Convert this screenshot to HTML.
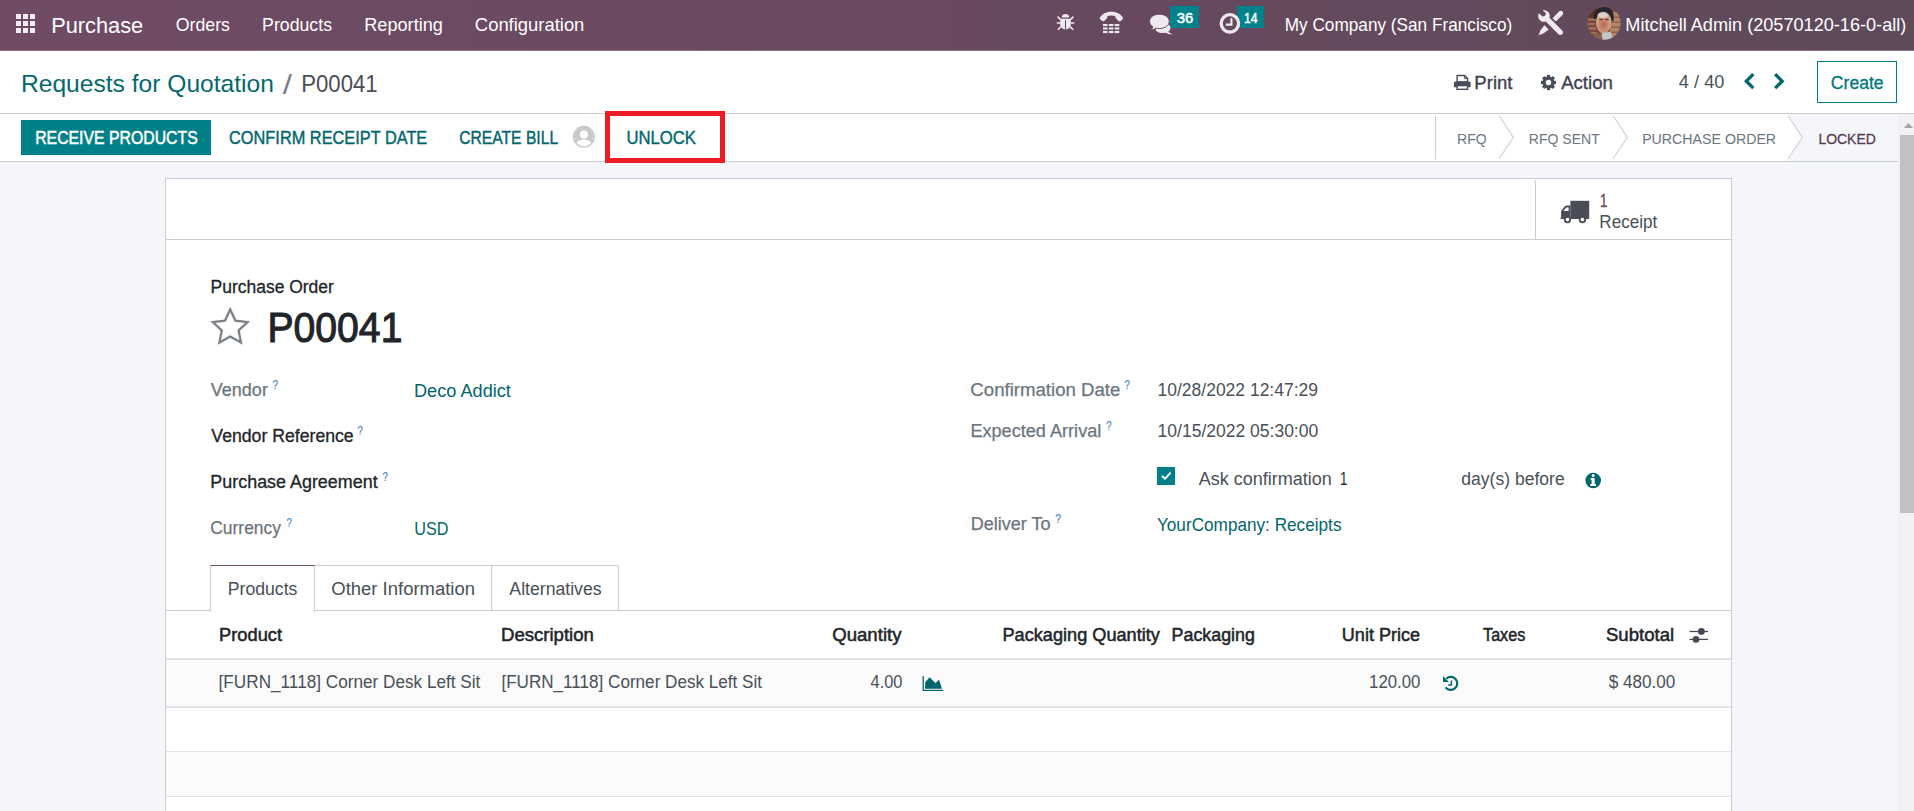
<!DOCTYPE html>
<html lang="en">
<head>
<meta charset="utf-8">
<title>Odoo - P00041</title>
<style>
html,body{margin:0;padding:0;}
body{width:1914px;height:811px;overflow:hidden;background:#f5f6fa;font-family:"Liberation Sans",sans-serif;}
#app{position:relative;width:1914px;height:811px;overflow:hidden;background:#f5f6fa;}
.abs{position:absolute;}
.t{position:absolute;white-space:nowrap;line-height:normal;transform-origin:0 0;}
svg{position:absolute;overflow:visible;}
.navbar{position:absolute;left:0;top:0;width:1914px;height:50px;background:linear-gradient(90deg,#704b66 0%,#68495f 50%,#5e4a5b 100%);}
.navbar-edge{position:absolute;left:0;top:50px;width:1914px;height:1px;background:linear-gradient(90deg,#92768b 0%,#8b7585 50%,#857582 100%);}
.cp{position:absolute;left:0;top:51px;width:1914px;height:62px;background:#fff;border-bottom:1px solid #c9ccd4;}
.sb{position:absolute;left:0;top:114px;width:1898px;height:47px;background:#fff;border-bottom:1px solid #c9ccd4;}
.btn-primary{position:absolute;left:21px;top:120px;width:190px;height:35px;background:#01808a;}
.btn-create{position:absolute;left:1817px;top:61px;width:78px;height:40px;border:1px solid #017e84;background:#fff;}
.hl{position:absolute;left:605px;top:111px;width:110px;height:42px;border:5px solid #ed1c24;}
.sheet{position:absolute;left:165px;top:178px;width:1565px;height:640px;background:#fff;border:1px solid #c9ccd4;}
.line{position:absolute;background:#c9ccd4;}
.scroll-track{position:absolute;left:1898px;top:114px;width:16px;height:697px;background:#f1f1f1;}
.scroll-thumb{position:absolute;left:1900px;top:135px;width:14px;height:378px;background:#c1c1c1;}
.badge{position:absolute;background:#00818b;}
</style>
</head>
<body>
<div id="app">

<!-- ============ content background / sheet ============ -->
<main class="sheet"></main>
<!-- button box -->
<div class="line" style="left:166px;top:239px;width:1565px;height:1px;"></div>
<div class="line" style="left:1535px;top:180px;width:1px;height:59px;"></div>
<!-- notebook tabs -->
<div class="line" style="left:166px;top:610px;width:1565px;height:1px;"></div>
<div class="abs" style="left:210px;top:565px;width:103px;height:45px;border:1px solid #c9ccd4;border-top:1px solid #714b67;border-bottom:1px solid #fff;background:#fff;"></div>
<div class="abs" style="left:315px;top:565px;width:176px;height:45px;border-top:1px solid #c9ccd4;border-right:1px solid #c9ccd4;"></div>
<div class="abs" style="left:492px;top:565px;width:126px;height:45px;border-top:1px solid #c9ccd4;border-right:1px solid #c9ccd4;"></div>
<!-- table -->
<div class="abs" style="left:166px;top:658px;width:1565px;height:2px;background:#dfe2e6;"></div>
<div class="abs" style="left:166px;top:660px;width:1565px;height:46px;background:#fbfbfc;"></div>
<div class="abs" style="left:166px;top:706px;width:1565px;height:2px;background:#dfe2e6;"></div>
<div class="abs" style="left:166px;top:751px;width:1565px;height:1px;background:#dfe2e6;"></div>
<div class="abs" style="left:166px;top:752px;width:1565px;height:44px;background:#fbfbfc;"></div>
<div class="abs" style="left:166px;top:796px;width:1565px;height:1px;background:#dfe2e6;"></div>

<!-- truck -->
<svg style="left:1560px;top:200px;" width="31" height="25" viewBox="0 0 31 25">
  <g fill="#4a4d57">
    <rect x="10.4" y="0.8" width="18.8" height="18.2"/>
    <path d="M10.4 5.4 H6.6 C5.9 5.4 5.3 5.7 4.9 6.2 L1.6 10.2 C1.3 10.6 1.1 11.1 1.1 11.6 V17.6 H0.5 V19 H10.4 Z"/>
    <circle cx="7.5" cy="19.6" r="3.7"/><circle cx="22.4" cy="19.6" r="3.7"/>
  </g>
  <path d="M3.4 11 L6.3 7.4 H8.6 V11 Z" fill="#fff"/>
  <circle cx="7.5" cy="19.6" r="1.8" fill="#fff"/><circle cx="22.4" cy="19.6" r="1.8" fill="#fff"/>
</svg>
<!-- star -->
<svg style="left:210px;top:307px;" width="41" height="39" viewBox="0 0 41 39">
  <path d="M20.2 2.4 L25.4 13.6 L37.6 15 L28.6 23.4 L31 35.6 L20.2 29.6 L9.4 35.6 L11.8 23.4 L2.8 15 L15 13.6 Z" fill="none" stroke="#7c8087" stroke-width="2.3" stroke-linejoin="miter"/>
</svg>
<!-- checkbox -->
<svg style="left:1157px;top:467px;" width="18" height="18" viewBox="0 0 18 18">
  <rect width="18" height="18" fill="#01808a"/>
  <path d="M5.3 9.3 L8 11.8 L13.1 6.2" fill="none" stroke="#fff" stroke-width="1.9" stroke-linecap="round" stroke-linejoin="round"/>
</svg>
<!-- info circle -->
<svg style="left:1585px;top:472px;" width="17" height="17" viewBox="0 0 17 17">
  <circle cx="8.2" cy="8.5" r="7.8" fill="#01666b"/>
  <circle cx="8.2" cy="3.5" r="1.5" fill="#fff"/>
  <path d="M5.6 5.9 H9.7 V12.1 H11 V14 H5.3 V12.1 H6.6 V7.8 H5.6 Z" fill="#fff"/>
</svg>
<!-- area chart -->
<svg style="left:922px;top:675px;" width="22" height="17" viewBox="0 0 22 17">
  <path d="M1.2 1 V15.4 H21.2" fill="none" stroke="#01666b" stroke-width="1.3"/>
  <path d="M3.1 13.7 V7.4 L7.5 2.25 L13.4 8 L17.1 4.85 L19.9 13.7 Z" fill="#01666b"/>
</svg>
<!-- history -->
<svg style="left:1442px;top:675px;" width="18" height="18" viewBox="0 0 18 18">
  <path d="M4.4 3.6 A6.5 6.5 0 1 1 3.6 12.4" fill="none" stroke="#01666b" stroke-width="2.2"/>
  <path d="M1 1.1 L1 6.9 L6.9 6.9 Z" fill="#01666b"/>
  <path d="M9.4 5.4 V10 H6.2" fill="none" stroke="#01666b" stroke-width="1.5"/>
</svg>
<!-- adjust sliders -->
<svg style="left:1689px;top:627px;" width="20" height="17" viewBox="0 0 20 17">
  <g stroke="#474a55" stroke-width="1.3"><path d="M0.5 4.5 H19"/><path d="M0.5 12.4 H19"/></g>
  <circle cx="12.4" cy="4.4" r="3.4" fill="#474a55"/><circle cx="7" cy="12.4" r="3.3" fill="#474a55"/>
</svg>

<div id="sheet-text">
<span class="t" style="left:1600px;top:191.00px;font-size:17.6px;color:#714B67;transform:translateX(0.02px) scaleX(0.7500);-webkit-text-stroke:0.4px #714B67;">1</span>
<span class="t" style="left:1599px;top:212.00px;font-size:17.6px;color:#495057;transform:translateX(0.37px) scaleX(0.9721);">Receipt</span>
<span class="t" style="left:210px;top:277.00px;font-size:17.6px;color:#212529;transform:translateX(0.55px) scaleX(0.9929);-webkit-text-stroke:0.3px #212529;">Purchase Order</span>
<span class="t" style="left:267px;top:303.00px;font-size:43.0px;color:#212529;transform:translateX(0.43px) scaleX(0.9104);-webkit-text-stroke:1.1px #212529;">P00041</span>
<span class="t" style="left:210px;top:380.00px;font-size:17.6px;color:#6c757d;transform:translateX(0.77px) scaleX(1.0243);-webkit-text-stroke:0.25px #6c757d;">Vendor</span>
<span class="t" style="left:272px;top:378.00px;font-size:12.5px;color:#4a82bd;transform:translateX(0.61px) scaleX(0.7959);-webkit-text-stroke:0.15px #4a82bd;">?</span>
<span class="t" style="left:413px;top:381.00px;font-size:17.6px;color:#01666b;transform:translateX(0.97px) scaleX(1.0323);">Deco Addict</span>
<span class="t" style="left:211px;top:426.00px;font-size:17.6px;color:#212529;transform:translateX(0.36px) scaleX(1.0035);-webkit-text-stroke:0.3px #212529;">Vendor Reference</span>
<span class="t" style="left:357px;top:424.00px;font-size:12.5px;color:#4a82bd;transform:translateX(0.42px) scaleX(0.7703);-webkit-text-stroke:0.15px #4a82bd;">?</span>
<span class="t" style="left:210px;top:472.00px;font-size:17.6px;color:#212529;transform:translateX(0.33px) scaleX(1.0182);-webkit-text-stroke:0.3px #212529;">Purchase Agreement</span>
<span class="t" style="left:382px;top:470.00px;font-size:12.5px;color:#4a82bd;transform:translateX(0.59px) scaleX(0.7693);-webkit-text-stroke:0.15px #4a82bd;">?</span>
<span class="t" style="left:210px;top:518.00px;font-size:17.6px;color:#6c757d;transform:translateX(0.30px) scaleX(0.9888);-webkit-text-stroke:0.25px #6c757d;">Currency</span>
<span class="t" style="left:286px;top:516.00px;font-size:12.5px;color:#4a82bd;transform:translateX(0.42px) scaleX(0.7703);-webkit-text-stroke:0.15px #4a82bd;">?</span>
<span class="t" style="left:414px;top:519.00px;font-size:17.6px;color:#01666b;transform:translateX(0.30px) scaleX(0.9225);">USD</span>
<span class="t" style="left:970px;top:380.00px;font-size:17.6px;color:#6c757d;transform:translateX(0.33px) scaleX(1.0582);-webkit-text-stroke:0.25px #6c757d;">Confirmation Date</span>
<span class="t" style="left:1124px;top:378.00px;font-size:12.5px;color:#4a82bd;transform:translateX(0.59px) scaleX(0.7693);-webkit-text-stroke:0.15px #4a82bd;">?</span>
<span class="t" style="left:1157px;top:380.00px;font-size:17.6px;color:#495057;transform:translateX(0.57px) scaleX(0.9937);">10/28/2022 12:47:29</span>
<span class="t" style="left:970px;top:421.00px;font-size:17.6px;color:#6c757d;transform:translateX(0.40px) scaleX(1.0296);-webkit-text-stroke:0.25px #6c757d;">Expected Arrival</span>
<span class="t" style="left:1106px;top:419.00px;font-size:12.5px;color:#4a82bd;transform:translateX(0.28px) scaleX(0.7755);-webkit-text-stroke:0.15px #4a82bd;">?</span>
<span class="t" style="left:1157px;top:421.00px;font-size:17.6px;color:#495057;transform:translateX(0.57px) scaleX(0.9951);">10/15/2022 05:30:00</span>
<span class="t" style="left:1198px;top:469.00px;font-size:17.6px;color:#495057;transform:translateX(0.69px) scaleX(1.0232);">Ask confirmation</span>
<span class="t" style="left:1340px;top:469.00px;font-size:17.6px;color:#2b2f36;transform:translateX(0.08px) scaleX(0.7500);">1</span>
<span class="t" style="left:1461px;top:469.00px;font-size:17.6px;color:#495057;transform:translateX(0.27px) scaleX(0.9972);">day(s) before</span>
<span class="t" style="left:970px;top:514.00px;font-size:17.6px;color:#6c757d;transform:translateX(0.63px) scaleX(1.0268);-webkit-text-stroke:0.25px #6c757d;">Deliver To</span>
<span class="t" style="left:1055px;top:512.00px;font-size:12.5px;color:#4a82bd;transform:translateX(0.35px) scaleX(0.8338);-webkit-text-stroke:0.15px #4a82bd;">?</span>
<span class="t" style="left:1156px;top:515.00px;font-size:17.6px;color:#01666b;transform:translateX(0.94px) scaleX(0.9760);">YourCompany: Receipts</span>
<span class="t" style="left:227px;top:579.00px;font-size:17.6px;color:#495057;transform:translateX(0.75px) scaleX(1.0037);">Products</span>
<span class="t" style="left:331px;top:579.00px;font-size:17.6px;color:#495057;transform:translateX(0.32px) scaleX(1.0493);">Other Information</span>
<span class="t" style="left:509px;top:579.00px;font-size:17.6px;color:#495057;transform:translateX(0.37px) scaleX(1.0032);">Alternatives</span>
<span class="t" style="left:219px;top:625.00px;font-size:17.6px;color:#212529;transform:translateX(0.11px) scaleX(1.0377);-webkit-text-stroke:0.5px #212529;">Product</span>
<span class="t" style="left:500px;top:625.00px;font-size:17.6px;color:#212529;transform:translateX(0.97px) scaleX(1.0553);-webkit-text-stroke:0.5px #212529;">Description</span>
<span class="t" style="left:832px;top:625.00px;font-size:17.6px;color:#212529;transform:translateX(0.16px) scaleX(1.0584);-webkit-text-stroke:0.5px #212529;">Quantity</span>
<span class="t" style="left:1002px;top:625.00px;font-size:17.6px;color:#212529;transform:translateX(0.47px) scaleX(1.0316);-webkit-text-stroke:0.5px #212529;">Packaging Quantity</span>
<span class="t" style="left:1171px;top:625.00px;font-size:17.6px;color:#212529;transform:translateX(0.61px) scaleX(1.0141);-webkit-text-stroke:0.5px #212529;">Packaging</span>
<span class="t" style="left:1341px;top:625.00px;font-size:17.6px;color:#212529;transform:translateX(0.80px) scaleX(1.0274);-webkit-text-stroke:0.5px #212529;">Unit Price</span>
<span class="t" style="left:1483px;top:625.00px;font-size:17.6px;color:#212529;transform:translateX(0.06px) scaleX(0.9170);-webkit-text-stroke:0.5px #212529;">Taxes</span>
<span class="t" style="left:1605px;top:625.00px;font-size:17.6px;color:#212529;transform:translateX(0.97px) scaleX(1.0550);-webkit-text-stroke:0.5px #212529;">Subtotal</span>
<span class="t" style="left:218px;top:672.00px;font-size:17.6px;color:#495057;transform:translateX(0.60px) scaleX(0.9757);">[FURN_1118] Corner Desk Left Sit</span>
<span class="t" style="left:501px;top:672.00px;font-size:17.6px;color:#495057;transform:translateX(0.41px) scaleX(0.9712);">[FURN_1118] Corner Desk Left Sit</span>
<span class="t" style="left:870px;top:672.00px;font-size:17.6px;color:#495057;transform:translateX(0.59px) scaleX(0.9312);">4.00</span>
<span class="t" style="left:1369px;top:672.00px;font-size:17.6px;color:#495057;transform:translateX(0.05px) scaleX(0.9550);">120.00</span>
<span class="t" style="left:1608px;top:672.00px;font-size:17.6px;color:#495057;transform:translateX(0.83px) scaleX(0.9714);">$ 480.00</span>
</div>

<!-- ============ navbar ============ -->
<header class="navbar"></header>
<div class="navbar-edge"></div>
<div class="badge" style="left:1170px;top:6px;width:29px;height:22px;"></div>
<div class="badge" style="left:1237px;top:6px;width:27px;height:22px;"></div>
<!-- apps grid -->
<svg style="left:16px;top:14px;" width="19" height="19" viewBox="0 0 19 19" fill="#f3eff2">
  <rect x="0" y="0" width="5" height="5"/><rect x="7" y="0" width="5" height="5"/><rect x="14" y="0" width="5" height="5"/>
  <rect x="0" y="7" width="5" height="5"/><rect x="7" y="7" width="5" height="5"/><rect x="14" y="7" width="5" height="5"/>
  <rect x="0" y="14" width="5" height="5"/><rect x="7" y="14" width="5" height="5"/><rect x="14" y="14" width="5" height="5"/>
</svg>
<!-- bug -->
<svg style="left:1056px;top:13px;" width="19" height="18" viewBox="0 0 19 18">
  <g fill="#efeaee" stroke="none">
    <path d="M5.8 4.6 A3.7 3.7 0 0 1 13.2 4.6 Z"/>
    <path d="M4.2 5.8 H14.8 V11 C14.8 14.3 12.6 16.3 9.5 16.3 C6.4 16.3 4.2 14.3 4.2 11 Z"/>
  </g>
  <g stroke="#efeaee" stroke-width="1.5" fill="none" stroke-linecap="butt">
    <path d="M1.6 3.6 L4.6 6.6"/><path d="M17.4 3.6 L14.4 6.6"/>
    <path d="M0.8 10 H4.4"/><path d="M18.2 10 H14.6"/>
    <path d="M1.8 16.8 L5 13.6"/><path d="M17.2 16.8 L14 13.6"/>
  </g>
  <rect x="9" y="7.2" width="1" height="9" fill="#5a3e8a"/>
</svg>
<!-- phone (voip) -->
<svg style="left:1099px;top:11px;" width="25" height="23" viewBox="0 0 25 23" fill="#efeaee">
  <path d="M0.9 6.6 C3.8 2.4 8 0.8 12.4 0.8 C16.8 0.8 21 2.4 23.9 6.6 C24.3 7.3 24 8.1 23.4 8.6 L21.6 10 C20.9 10.5 19.9 10.4 19.3 9.8 L16.6 6.9 C16.2 6.4 16.2 5.6 16.5 5.1 C15.2 4.6 13.8 4.4 12.4 4.4 C11 4.4 9.6 4.6 8.3 5.1 C8.6 5.6 8.6 6.4 8.2 6.9 L5.5 9.8 C4.9 10.4 3.9 10.5 3.2 10 L1.4 8.6 C0.8 8.1 0.5 7.3 0.9 6.6 Z"/>
  <rect x="4" y="13" width="4.6" height="2.1"/><rect x="9.9" y="13" width="4.6" height="2.1"/><rect x="15.7" y="13" width="4.6" height="2.1"/>
  <rect x="4" y="16.4" width="4.6" height="2.1"/><rect x="9.9" y="16.4" width="4.6" height="2.1"/><rect x="15.7" y="16.4" width="4.6" height="2.1"/>
  <rect x="4" y="19.9" width="4.6" height="2.2"/><rect x="9.9" y="19.9" width="4.6" height="2.2"/><rect x="15.7" y="19.9" width="4.6" height="2.2"/>
</svg>
<!-- comments -->
<svg style="left:1149px;top:14px;" width="25" height="21" viewBox="0 0 25 21">
  <path d="M11.5 8.5 C16 8.5 21.5 10 21.5 13.8 C21.5 15.4 20.6 16.7 19.4 17.6 C19.9 18.7 21.5 19.6 23.6 20.2 C21.2 20.4 18.6 19.9 16.9 18.7 C15.7 19 14.6 19 13.5 19 C9.5 19 6.5 17.3 6.5 14.5 Z" fill="#efeaee"/>
  <path d="M10.4 0.2 C16 0.2 20.3 3.4 20.3 7.4 C20.3 11.4 16 14.6 10.4 14.6 C9.2 14.6 8 14.4 6.9 14.1 C5.4 15.3 3.6 16 1.4 16.1 C2.6 15.2 3.5 14 3.9 12.7 C1.8 11.4 0.5 9.5 0.5 7.4 C0.5 3.4 4.8 0.2 10.4 0.2 Z" fill="#efeaee" stroke="#66495e" stroke-width="1"/>
</svg>
<!-- clock -->
<svg style="left:1219px;top:12px;" width="22" height="23" viewBox="0 0 22 23">
  <circle cx="10.9" cy="11.4" r="8.7" fill="none" stroke="#efeaee" stroke-width="3.3"/>
  <path d="M12.4 6.2 V12.6 H6.8" fill="none" stroke="#efeaee" stroke-width="2.1"/>
</svg>
<!-- studio tools -->
<svg style="left:1538px;top:10px;" width="26" height="26" viewBox="0 0 26 26" fill="#efeaee">
  <!-- wrench -->
  <path d="M0.9 3.2 L4.4 6.6 L7.2 5.8 L7.9 3 L4.6 0.6 C7.4 -0.2 10.2 1.2 11.3 3.6 C11.9 5 11.9 6.5 11.5 7.8 L24.2 20.4 C25.3 21.5 25.3 23.2 24.2 24.2 C23.2 25.3 21.5 25.3 20.4 24.2 L7.8 11.6 C5.2 12.4 2.4 11.4 1 9 C0 7.2 -0.1 5 0.9 3.2 Z"/>
  <!-- screwdriver handle -->
  <path d="M14.6 8.2 L21 1.6 C22 0.6 23.6 0.6 24.5 1.6 C25.4 2.5 25.4 4 24.5 5 L17.9 11.5 Z"/>
  <!-- screwdriver tip -->
  <path d="M6.4 15.2 L10.7 19.4 L5.4 23.6 L0.6 25.3 L2.3 20.5 Z"/>
</svg>
<!-- avatar -->
<svg style="left:1587px;top:6px;" width="34" height="34" viewBox="0 0 34 34">
  <defs>
    <clipPath id="avc"><circle cx="17.1" cy="17.2" r="16.6"/></clipPath>
    <filter id="avb" x="-10%" y="-10%" width="120%" height="120%"><feGaussianBlur stdDeviation="0.7"/></filter>
    <radialGradient id="avf" cx="50%" cy="58%" r="60%"><stop offset="0" stop-color="#b8694c"/><stop offset="0.55" stop-color="#c98f76"/><stop offset="1" stop-color="#d9c3b8"/></radialGradient>
  </defs>
  <g clip-path="url(#avc)">
    <g filter="url(#avb)">
    <rect x="-2" y="-2" width="38" height="38" fill="#7a4a3a"/>
    <rect x="-2" y="-2" width="12" height="14" fill="#5e3228"/>
    <rect x="0" y="12.5" width="9" height="2" fill="#a8775f"/><rect x="0" y="17" width="8" height="2" fill="#9c6c56"/><rect x="0" y="21.5" width="9" height="2" fill="#a8775f"/><rect x="1" y="26" width="9" height="2" fill="#9c6c56"/>
    <rect x="23" y="6" width="13" height="30" fill="#b48466"/>
    <rect x="24" y="10.6" width="10" height="1.2" fill="#8a5a44"/><rect x="24" y="15.6" width="10" height="1.2" fill="#8a5a44"/><rect x="24" y="20.6" width="10" height="1.2" fill="#8a5a44"/><rect x="24" y="25.6" width="10" height="1.2" fill="#8a5a44"/>
    <path d="M6.5 13 C6 4.5 12 1 17.5 1 C23.5 1 28 5 26.5 15 L24.5 15 C24 8.5 21 5.5 16.5 5.5 C12 5.5 9.5 8.5 9 13 Z" fill="#24272d"/>
    <ellipse cx="16.6" cy="16.8" rx="7.4" ry="10.6" fill="url(#avf)"/>
    <ellipse cx="15.8" cy="9.2" rx="5" ry="3" fill="#ddd0cb"/>
    <rect x="12.2" y="12.8" width="3.4" height="1.3" fill="#5a3a32"/><rect x="18.2" y="12.8" width="3.4" height="1.3" fill="#5a3a32"/>
    <path d="M14.5 27.5 L23.5 25.5 L27 35 L15.5 35 Z" fill="#c4c6cc"/>
    <path d="M7 28 L14.5 27.5 L15.5 35 L4 35 Z" fill="#8e5f4c"/>
    </g>
  </g>
</svg>

<nav id="nav-text">
<span class="t" style="left:51px;top:12.00px;font-size:22.8px;color:#ffffff;transform:translateX(0.16px) scaleX(0.9560);">Purchase</span>
<span class="t" style="left:175px;top:15.00px;font-size:18.2px;color:#ffffff;transform:translateX(0.82px) scaleX(0.9733);">Orders</span>
<span class="t" style="left:262px;top:15.00px;font-size:18.2px;color:#ffffff;transform:translateX(0.10px) scaleX(0.9740);">Products</span>
<span class="t" style="left:364px;top:15.00px;font-size:18.2px;color:#ffffff;transform:translateX(0.28px) scaleX(0.9969);">Reporting</span>
<span class="t" style="left:474px;top:15.00px;font-size:18.2px;color:#ffffff;transform:translateX(0.85px) scaleX(1.0123);">Configuration</span>
<span class="t" style="left:1176px;top:10.00px;font-size:14.6px;color:#ffffff;transform:translateX(0.77px) scaleX(1.0165);-webkit-text-stroke:0.5px #ffffff;">36</span>
<span class="t" style="left:1243px;top:10.00px;font-size:14.6px;color:#ffffff;transform:translateX(0.91px) scaleX(0.8421);-webkit-text-stroke:0.5px #ffffff;">14</span>
<span class="t" style="left:1284px;top:15.00px;font-size:18.2px;color:#ffffff;transform:translateX(0.74px) scaleX(0.9457);">My Company (San Francisco)</span>
<span class="t" style="left:1625px;top:15.00px;font-size:18.2px;color:#ffffff;transform:translateX(0.34px) scaleX(0.9961);">Mitchell Admin (20570120-16-0-all)</span>
</nav>

<!-- ============ control panel ============ -->
<section class="cp"></section>
<div class="btn-create"></div>
<!-- print -->
<svg style="left:1453px;top:74px;" width="19" height="17" viewBox="0 0 19 17">
  <path d="M4.1 1.5 H11.6 L14.6 4.4 V8 H4.1 Z" fill="#fff" stroke="#4a4e5a" stroke-width="1.4"/>
  <path d="M11.4 1.4 V4.6 H14.6" fill="none" stroke="#4a4e5a" stroke-width="1"/>
  <path d="M2.6 7.6 H16 C16.9 7.6 17.6 8.3 17.6 9.2 V13.2 H0.9 V9.2 C0.9 8.3 1.6 7.6 2.6 7.6 Z" fill="#4a4e5a"/>
  <rect x="4.1" y="11.6" width="10.5" height="3.7" fill="#fff" stroke="#4a4e5a" stroke-width="1.4"/>
</svg>
<!-- cog -->
<svg style="left:1540px;top:74px;" width="17" height="17" viewBox="-8.5 -8.5 17 17">
  <g fill="#4a4e5a">
    <circle r="5.9"/>
    <g id="tooth"><rect x="-1.7" y="-7.55" width="3.4" height="15.1"/></g>
    <rect x="-1.7" y="-7.55" width="3.4" height="15.1" transform="rotate(45)"/>
    <rect x="-1.7" y="-7.55" width="3.4" height="15.1" transform="rotate(90)"/>
    <rect x="-1.7" y="-7.55" width="3.4" height="15.1" transform="rotate(135)"/>
  </g>
  <circle r="2.7" fill="#fff"/>
</svg>
<!-- pager chevrons -->
<svg style="left:1744px;top:72.85px;" width="11" height="17" viewBox="0 0 11 17">
  <path d="M9.31 1.17 L2.33 8.15 L9.31 15.13" fill="none" stroke="#01666b" stroke-width="3.3" stroke-linejoin="miter"/>
</svg>
<svg style="left:1773.7px;top:72.85px;" width="11" height="17" viewBox="0 0 11 17">
  <path d="M1.17 1.17 L8.15 8.15 L1.17 15.13" fill="none" stroke="#01666b" stroke-width="3.3" stroke-linejoin="miter"/>
</svg>

<div id="cp-text">
<span class="t" style="left:20px;top:70.00px;font-size:24.6px;color:#05686f;transform:translateX(0.98px);">Requests for Quotation</span>
<span class="t" style="left:282px;top:69.00px;font-size:27.9px;color:#7b8087;transform:translateX(0.66px) scaleX(1.1958);">/</span>
<span class="t" style="left:301px;top:70.00px;font-size:24.6px;color:#4a4e57;transform:translateX(0.21px) scaleX(0.9014);">P00041</span>
<span class="t" style="left:1474px;top:73.00px;font-size:17.6px;color:#3d4150;transform:translateX(0.36px) scaleX(1.0529);-webkit-text-stroke:0.35px #3d4150;">Print</span>
<span class="t" style="left:1561px;top:73.00px;font-size:17.6px;color:#3d4150;transform:translateX(0.14px) scaleX(1.0586);-webkit-text-stroke:0.35px #3d4150;">Action</span>
<span class="t" style="left:1678px;top:72.00px;font-size:17.6px;color:#495057;transform:translateX(0.86px) scaleX(1.0335);">4 / 40</span>
<span class="t" style="left:1830px;top:73.00px;font-size:17.6px;color:#01777d;transform:translateX(0.83px);-webkit-text-stroke:0.3px #01777d;">Create</span>
</div>

<!-- ============ status bar ============ -->
<section class="sb"></section>
<div class="btn-primary"></div>
<!-- active state bg -->
<svg style="left:1435px;top:114px;" width="463" height="47" viewBox="0 0 463 47">
  <polygon points="353,0 463,0 463,47 353,47 367,23.5" fill="#f5f6fa"/>
  <line x1="0.5" y1="1.5" x2="0.5" y2="45.5" stroke="#c9ccd4" stroke-width="1"/>
  <polyline points="64,1.5 78.3,23.3 64,45" fill="none" stroke="#cfd3d9" stroke-width="1.2"/>
  <polyline points="178,1.5 192.3,23.3 178,45" fill="none" stroke="#cfd3d9" stroke-width="1.2"/>
  <polyline points="353,1.5 367.3,23.3 353,45" fill="none" stroke="#cfd3d9" stroke-width="1.2"/>
</svg>
<div class="hl"></div>
<!-- grey user avatar -->
<svg style="left:572px;top:125px;" width="24" height="24" viewBox="0 0 24 24">
  <defs><clipPath id="uac"><circle cx="11.9" cy="11.7" r="9.6"/></clipPath></defs>
  <circle cx="11.9" cy="11.7" r="10.3" fill="#c9c9c9" stroke="#c2c5c9" stroke-width="1.2"/>
  <circle cx="11.9" cy="11.7" r="9" fill="#fff"/>
  <g clip-path="url(#uac)" fill="#c6c6c6">
    <circle cx="11.9" cy="11.7" r="9" fill="#c8c8c8"/>
    <circle cx="11.9" cy="9.6" r="4.1" fill="#fff"/>
    <path d="M3.6 22 C3.6 16.6 7.2 14.4 11.9 14.4 C16.6 14.4 20.2 16.6 20.2 22 Z" fill="#fff"/>
  </g>
</svg>

<div id="sb-text">
<span class="t" style="left:35px;top:128.00px;font-size:17.8px;color:#ffffff;transform:translateX(0.21px) scaleX(0.8889);-webkit-text-stroke:0.5px #ffffff;">RECEIVE PRODUCTS</span>
<span class="t" style="left:229px;top:128.00px;font-size:17.8px;color:#01666b;transform:translateX(0.06px) scaleX(0.9189);-webkit-text-stroke:0.4px #01666b;">CONFIRM RECEIPT DATE</span>
<span class="t" style="left:459px;top:128.00px;font-size:17.8px;color:#01666b;transform:translateX(0.16px) scaleX(0.8812);-webkit-text-stroke:0.4px #01666b;">CREATE BILL</span>
<span class="t" style="left:626px;top:128.00px;font-size:17.8px;color:#01666b;transform:translateX(0.47px) scaleX(0.9383);-webkit-text-stroke:0.4px #01666b;">UNLOCK</span>
<span class="t" style="left:1457px;top:130.00px;font-size:15.5px;color:#6c757d;transform:translateX(0.01px) scaleX(0.9083);">RFQ</span>
<span class="t" style="left:1528px;top:130.00px;font-size:15.5px;color:#6c757d;transform:translateX(0.82px) scaleX(0.9047);">RFQ SENT</span>
<span class="t" style="left:1642px;top:130.00px;font-size:15.5px;color:#6c757d;transform:translateX(0.15px) scaleX(0.9148);">PURCHASE ORDER</span>
<span class="t" style="left:1818px;top:130.00px;font-size:15.5px;color:#553a4f;transform:translateX(0.39px) scaleX(0.9001);-webkit-text-stroke:0.3px #553a4f;">LOCKED</span>
</div>

<!-- ============ scrollbar ============ -->
<div class="scroll-track"></div>
<div class="scroll-thumb"></div>
<svg style="left:1898px;top:114px;" width="16" height="21" viewBox="0 0 16 21"><polygon points="10.5,9 15,14 6,14" fill="#a3a3a3"/></svg>

</div>
</body>
</html>
